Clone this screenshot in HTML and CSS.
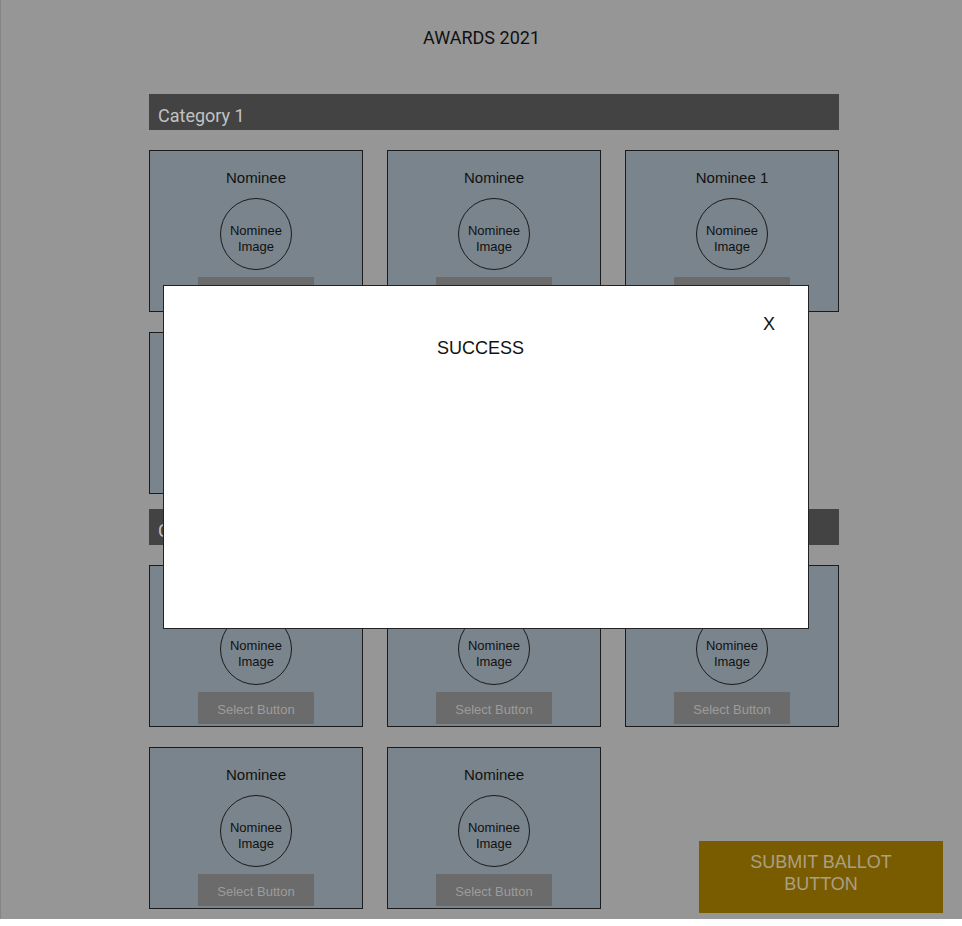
FILE: index.html
```html
<!DOCTYPE html>
<html lang="en">
<head>
    <meta charset="UTF-8">
    <meta name="viewport" content="width=device-width, initial-scale=1.0">
    <title>Awards 2021</title>
    <link rel="stylesheet" href="styles.css">
</head>
<body>
    <div class="page">
        <h1>AWARDS 2021</h1>

        <div class="ballot">
            <section class="category">
                <div class="category-title">Category 1</div>
                <div class="nominees">
                    <div class="card">
                        <div class="nominee-name">Nominee</div>
                        <div class="nominee-image">Nominee<br>Image</div>
                        <button class="select-btn">Select Button</button>
                    </div>
                    <div class="card">
                        <div class="nominee-name">Nominee</div>
                        <div class="nominee-image">Nominee<br>Image</div>
                        <button class="select-btn">Select Button</button>
                    </div>
                    <div class="card">
                        <div class="nominee-name">Nominee 1</div>
                        <div class="nominee-image">Nominee<br>Image</div>
                        <button class="select-btn">Select Button</button>
                    </div>
                    <div class="card">
                        <div class="nominee-name">Nominee</div>
                        <div class="nominee-image">Nominee<br>Image</div>
                        <button class="select-btn">Select Button</button>
                    </div>
                </div>
            </section>

            <section class="category">
                <div class="category-title">Category 2</div>
                <div class="nominees">
                    <div class="card">
                        <div class="nominee-name">Nominee</div>
                        <div class="nominee-image">Nominee<br>Image</div>
                        <button class="select-btn">Select Button</button>
                    </div>
                    <div class="card">
                        <div class="nominee-name">Nominee</div>
                        <div class="nominee-image">Nominee<br>Image</div>
                        <button class="select-btn">Select Button</button>
                    </div>
                    <div class="card">
                        <div class="nominee-name">Nominee</div>
                        <div class="nominee-image">Nominee<br>Image</div>
                        <button class="select-btn">Select Button</button>
                    </div>
                    <div class="card">
                        <div class="nominee-name">Nominee</div>
                        <div class="nominee-image">Nominee<br>Image</div>
                        <button class="select-btn">Select Button</button>
                    </div>
                    <div class="card">
                        <div class="nominee-name">Nominee</div>
                        <div class="nominee-image">Nominee<br>Image</div>
                        <button class="select-btn">Select Button</button>
                    </div>
                </div>
            </section>
        </div>

        <button class="submit-btn">SUBMIT BALLOT<br>BUTTON</button>
    </div>

    <div class="modal">
        <span class="close">X</span>
        <h2>SUCCESS</h2>
    </div>
</body>
</html>
```

FILE: styles.css
```css
body {
    margin: 0;
    background: white;
    font-family: "Liberation Sans", Arial, sans-serif;
}
.page {
    height: 919px;
    background: #969696;
    border-left: 1px solid #858585;
    box-sizing: border-box;
}
h1 {
    margin: 0;
    padding-top: 27px;
    font-family: Roboto, sans-serif;
    font-size: 18px;
    font-weight: normal;
    line-height: 22px;
    text-align: center;
    color: #111;
}
.ballot {
    width: 690px;
    margin: 45px 0 0 148px;
}
.category {
    margin-bottom: 15px;
}
.category-title {
    height: 36px;
    padding-left: 9px;
    background: #434343;
    color: #c2c2c2;
    font-family: Roboto, sans-serif;
    font-size: 18px;
    line-height: 43px;
}
.nominees {
    display: grid;
    grid-template-columns: repeat(3, 214px);
    gap: 20px 24px;
    margin-top: 20px;
}
.card {
    height: 162px;
    box-sizing: border-box;
    padding-top: 18px;
    border: 1px solid #1b1b1b;
    background: #7a848c;
    display: flex;
    flex-direction: column;
    align-items: center;
}
.nominee-name {
    font-size: 15px;
    line-height: 18px;
    color: #111;
    margin-bottom: 11px;
}
.nominee-image {
    width: 72px;
    height: 72px;
    box-sizing: border-box;
    border: 1px solid #1b1b1b;
    border-radius: 50%;
    display: flex;
    align-items: center;
    justify-content: center;
    padding-top: 9px;
    font-size: 13px;
    line-height: 16px;
    text-align: center;
    color: #111;
}
.select-btn {
    width: 116px;
    height: 32px;
    margin-top: 7px;
    padding-top: 3px;
    border: none;
    background: #6b6b6b;
    color: #9c9c9c;
    font-family: "Liberation Sans", Arial, sans-serif;
    font-size: 13px;
}
.submit-btn {
    position: fixed;
    right: 19px;
    bottom: 13px;
    width: 244px;
    height: 72px;
    border: none;
    padding-bottom: 10px;
    background: #7a5c00;
    color: #aaa084;
    font-family: "Liberation Sans", Arial, sans-serif;
    font-size: 18px;
    line-height: 22px;
}
.modal {
    position: fixed;
    left: 163px;
    top: 285px;
    width: 646px;
    height: 344px;
    box-sizing: border-box;
    border: 1px solid #222;
    background: white;
}
.modal h2 {
    margin: 51px 11px 0 0;
    font-size: 18px;
    font-weight: normal;
    line-height: 22px;
    text-align: center;
    color: #111;
}
.close {
    position: absolute;
    top: 28px;
    right: 33px;
    font-size: 18px;
    line-height: 20px;
    color: #111;
}
```
